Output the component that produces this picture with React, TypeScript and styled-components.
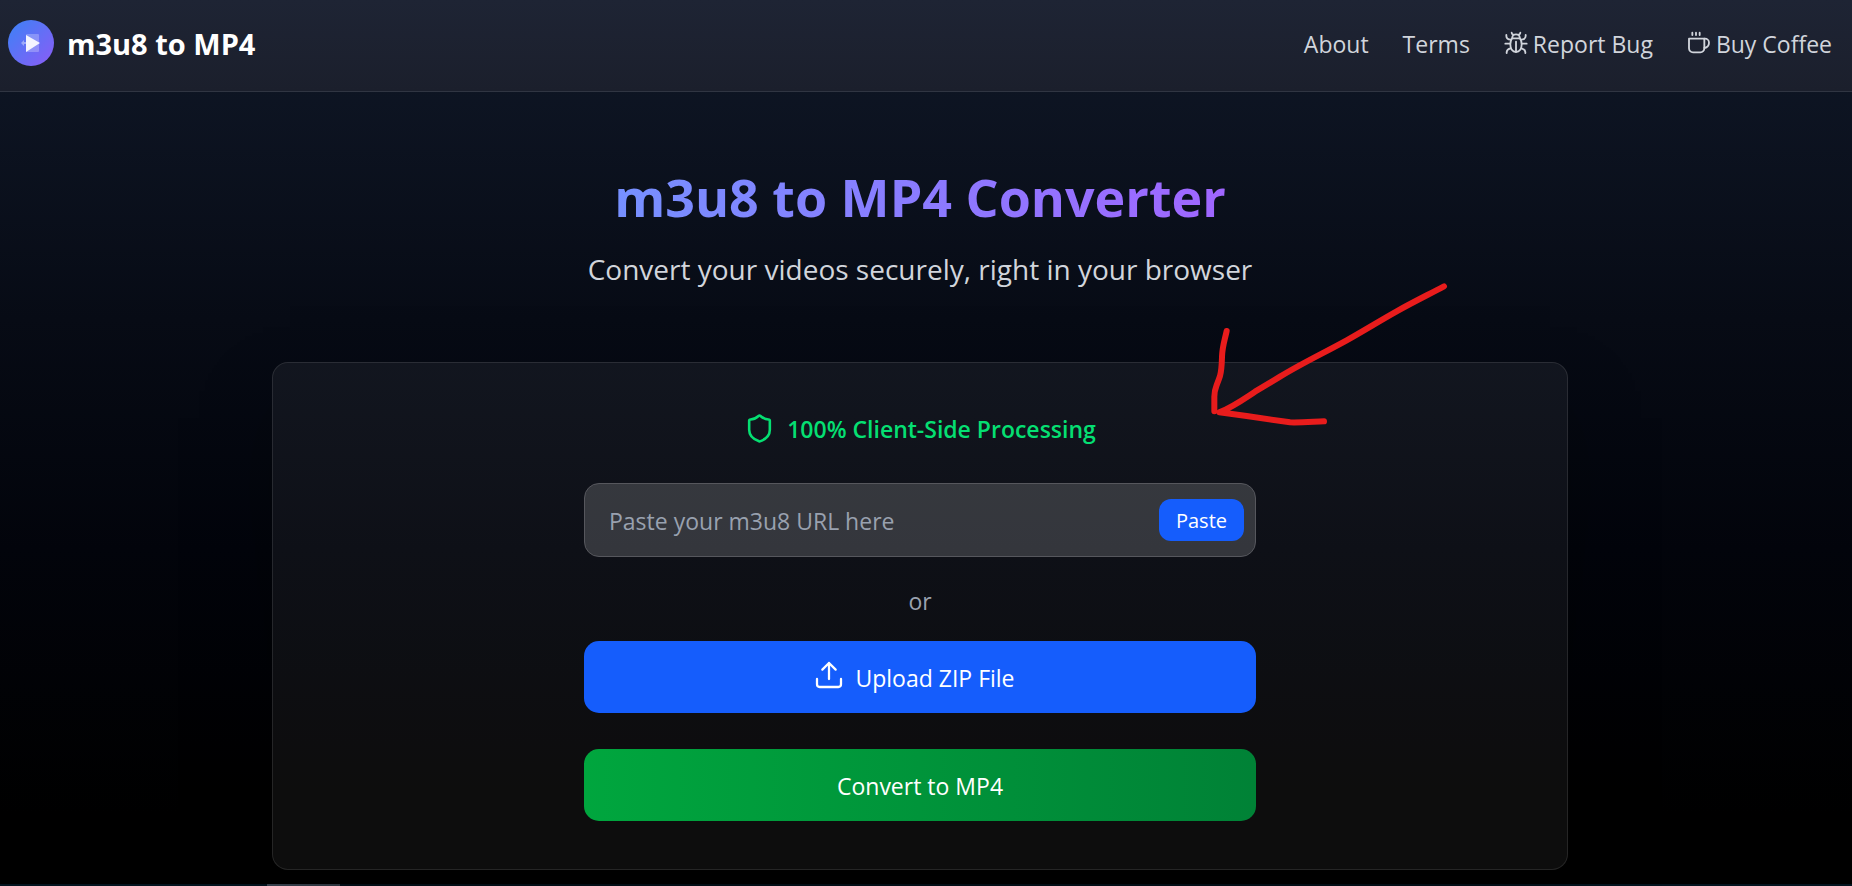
import React from "react";
import styled, { createGlobalStyle } from "styled-components";
import { Shield } from "lucide-react";

const GlobalStyle = createGlobalStyle`
  * { box-sizing: border-box; }
  body { margin: 0; background: #000; font-family: "Open Sans", "Noto Sans", sans-serif; }
  button, input { font-family: inherit; }
`;

const Page = styled.div`
  min-height: 100vh;
  display: flex;
  flex-direction: column;
  background: linear-gradient(to bottom, #101828 0%, #070b15 36%, #02040b 62%, #000 92%);
`;

const Header = styled.header`
  display: flex;
  align-items: center;
  justify-content: space-between;
  height: 92px;
  padding: 0 20px 4px 8px;
  background: linear-gradient(to bottom, #1e2434, #1b1f2c);
  border-bottom: 1px solid #303542;
`;

const Brand = styled.a`
  display: flex;
  align-items: center;
  gap: 13px;
  color: #fff;
  font-size: 29px;
  line-height: 36px;
  font-weight: 700;
  text-decoration: none;
  svg { margin-bottom: 2px; }
`;

const Nav = styled.nav`
  display: flex;
  align-items: center;
  gap: 34px;
`;

const NavLink = styled.a`
  display: flex;
  align-items: center;
  gap: 5px;
  color: #d1d5dc;
  font-size: 23px;
  line-height: 36px;
  text-decoration: none;
  svg { margin-bottom: 2px; }
`;

const Main = styled.main`
  flex: 1;
  display: flex;
  flex-direction: column;
  align-items: center;
  padding: 72px 12px 14px 0;
`;

const Title = styled.h1`
  margin: 0;
  font-size: 52px;
  line-height: 66px;
  font-weight: 700;
  color: transparent;
  background: linear-gradient(to right, #7690ff, #a066ff);
  background-clip: text;
`;

const Subtitle = styled.p`
  margin: 18px 0 0;
  color: #d1d5dc;
  font-size: 28px;
  line-height: 42px;
`;

const Card = styled.section`
  position: relative;
  display: flex;
  flex-direction: column;
  align-items: center;
  width: calc(100% - 96px);
  max-width: 1296px;
  margin-top: 72px;
  padding: 48px;
  border: 1px solid rgba(255, 255, 255, 0.1);
  border-radius: 16px;
  background: rgba(255, 255, 255, 0.05);
  box-shadow: 0 38px 75px -18px rgba(0, 0, 0, 0.5);
`;

const Badge = styled.div`
  display: flex;
  align-items: center;
  gap: 12px;
  color: #05df72;
  font-size: 23px;
  line-height: 36px;
  font-weight: 600;
  svg { margin-bottom: 2px; }
`;

const Form = styled.form`
  display: flex;
  flex-direction: column;
  width: 100%;
  max-width: 672px;
  margin-top: 36px;
`;

const Field = styled.div`
  display: flex;
  align-items: center;
  height: 74px;
  padding: 0 11px 0 24px;
  border: 1px solid #56575d;
  border-radius: 15px;
  background: rgba(255, 255, 255, 0.16);
`;

const UrlInput = styled.input`
  flex: 1;
  min-width: 0;
  padding: 2px 0 0;
  border: 0;
  outline: 0;
  background: transparent;
  color: #fff;
  font-size: 23px;
  line-height: 36px;
  &::placeholder { color: #99a1af; opacity: 1; }
`;

const PasteButton = styled.button`
  height: 42px;
  padding: 2px 17px 0;
  border: 0;
  border-radius: 12px;
  background: #155dfc;
  color: #fff;
  font-size: 20px;
  line-height: 30px;
`;

const Divider = styled.p`
  margin: 26px 0 22px;
  color: #99a1af;
  font-size: 23px;
  line-height: 36px;
  text-align: center;
`;

const ActionButton = styled.button<{ $fill: string }>`
  display: flex;
  align-items: center;
  justify-content: center;
  height: 72px;
  padding: 2px 0 0;
  border: 0;
  border-radius: 15px;
  background: ${(p) => p.$fill};
  color: #fff;
  font-size: 23px;
  line-height: 36px;
  svg { margin: 0 10px 6px -12px; }
  & + & { margin-top: 36px; }
`;

const Arrow = styled.svg`
  position: absolute;
  top: -103px;
  right: 87px;
  width: 300px;
  height: 180px;
  pointer-events: none;
`;

const Track = styled.footer`
  height: 2px;
  padding-left: 267px;
  background: #03141f;
`;

const Thumb = styled.div`
  width: 73px;
  height: 2px;
  background: #3b4653;
`;

const Logo = () => (
  <svg width="46" height="46" viewBox="0 0 46 46" aria-hidden="true">
    <defs>
      <linearGradient id="logo" x1="0" y1="0" x2="1" y2="1">
        <stop offset="0" stopColor="#3b82f6" />
        <stop offset="1" stopColor="#8b5cf6" />
      </linearGradient>
    </defs>
    <circle cx="23" cy="23" r="23" fill="url(#logo)" />
    <rect x="18" y="14" width="13" height="18" rx="1" fill="#fff" opacity="0.25" />
    <path d="M18 15 L32 23 L18 32 Z" fill="#fff" opacity="0.9" />
    <path d="M13 23 L16 20 V22 H18 V24 H16 V26 Z" fill="#fff" opacity="0.4" />
  </svg>
);

const BugIcon = () => (
  <svg width="24" height="24" viewBox="0 0 72 72" fill="none" stroke="currentColor" strokeWidth="5.5" strokeLinecap="round" strokeLinejoin="round" aria-hidden="true">
    <path d="M23 5 Q23 9 28 11 M49 5 Q49 9 44 11" />
    <path d="M25 22 V19 A11 9 0 0 1 47 19 V22" />
    <path d="M24 22 H48 Q53 30 53 40 C53 53 47 63 36 63 C25 63 19 53 19 40 Q19 30 24 22 Z" />
    <path d="M36 32 V62" />
    <path d="M7 12 V15 Q7 25 20 26 M65 12 V15 Q65 25 52 26" />
    <path d="M4 38 H18 M54 38 H68" />
    <path d="M8 66 V63 Q9 54 20 52 M64 66 V63 Q63 54 52 52" />
  </svg>
);

const CoffeeIcon = () => (
  <svg width="24" height="24" viewBox="0 0 72 72" fill="none" stroke="currentColor" strokeWidth="5.5" strokeLinecap="round" strokeLinejoin="round" aria-hidden="true">
    <path d="M6 23 H52 V52 A12 12 0 0 1 40 64 H18 A12 12 0 0 1 6 52 Z" />
    <path d="M52 23 H54 A12 12 0 0 1 66 35 C66 43 61 49 52 51" />
    <path d="M16 5 V12 M27 5 V12 M38 5 V12" />
  </svg>
);

const UploadIcon = () => (
  <svg width="32" height="32" viewBox="0 0 24 24" fill="none" stroke="currentColor" strokeWidth="1.7" strokeLinecap="round" strokeLinejoin="round" aria-hidden="true">
    <path d="M3 15v4a2 2 0 0 0 2 2h14a2 2 0 0 0 2-2v-4M12 15V3M7 8l5-5 5 5" />
  </svg>
);

export default function App() {
  return (
    <>
      <GlobalStyle />
      <Page>
        <Header>
          <Brand href="#">
            <Logo />
            m3u8 to MP4
          </Brand>
          <Nav>
            <NavLink href="#about">About</NavLink>
            <NavLink href="#terms">Terms</NavLink>
            <NavLink href="#bug"><BugIcon />Report Bug</NavLink>
            <NavLink href="#coffee"><CoffeeIcon />Buy Coffee</NavLink>
          </Nav>
        </Header>
        <Main>
          <Title>m3u8 to MP4 Converter</Title>
          <Subtitle>Convert your videos securely, right in your browser</Subtitle>
          <Card>
            <Badge><Shield size={31} strokeWidth={2} />100% Client-Side Processing</Badge>
            <Form onSubmit={(e) => e.preventDefault()}>
              <Field>
                <UrlInput type="text" aria-label="m3u8 URL" placeholder="Paste your m3u8 URL here" />
                <PasteButton type="button">Paste</PasteButton>
              </Field>
              <Divider>or</Divider>
              <ActionButton type="button" $fill="#155dfc"><UploadIcon />Upload ZIP File</ActionButton>
              <ActionButton type="submit" $fill="linear-gradient(to right, #00a63e, #008236)">Convert to MP4</ActionButton>
            </Form>
            <Arrow viewBox="0 0 900 540" fill="none" stroke="#e81c1c" strokeWidth="18" strokeLinecap="round" strokeLinejoin="round" aria-hidden="true">
              <path d="M792 79 C745 104 698 127 650 154 C600 182 550 213 500 241 C435 277 365 310 300 350 L225 395 C190 418 160 440 118 457 L200 468 L330 487 C365 488 400 485 432 484" />
              <path d="M140 213 C133 245 127 260 126 290 C125 325 125 330 120 348 C107 387 103 385 103 410 L103 454" />
            </Arrow>
          </Card>
        </Main>
        <Track><Thumb /></Track>
      </Page>
    </>
  );
}
